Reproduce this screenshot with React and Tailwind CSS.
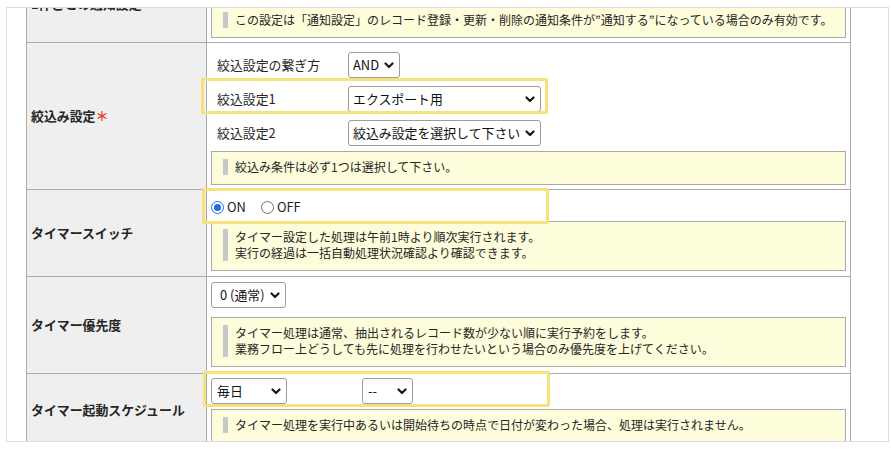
import React from "react";

const jp = "font-['Noto_Sans_CJK_JP','Noto_Sans',sans-serif]";

function Select({ value, className }) {
  return (
    <div className={`flex h-[26px] items-center rounded-[3px] border border-[#9c9c9c] bg-white pl-[4px] pr-[5px] text-[12.9px] text-[#111] ${className}`}>
      <span className="flex-1 overflow-hidden whitespace-nowrap leading-[20px]">{value}</span>
      <svg width="10" height="7" viewBox="0 0 10 7" className="ml-[3px] shrink-0">
        <path d="M1.5 1.5 L5 5 L8.5 1.5" fill="none" stroke="#1a1a1a" strokeWidth="2.2" strokeLinecap="round" strokeLinejoin="round" />
      </svg>
    </div>
  );
}

function Note({ lines, className = "" }) {
  return (
    <div className={`border border-[#aaa] bg-[#fdfcdb] pl-[11px] pt-[7px] pb-[9px] ${className}`}>
      <div className="border-l-[5px] border-[#c8c8c8] pl-[7px] text-[12px] leading-[16px] text-[#262626]">
        {lines.map((l, i) => (
          <div key={i} className="whitespace-nowrap">{l}</div>
        ))}
      </div>
    </div>
  );
}

function Row({ label, required, className, children }) {
  return (
    <div className={`flex border-b border-[#aaa] ${className}`}>
      <div className="flex w-[180px] shrink-0 items-center border-r border-[#aaa] bg-[#efefef] pl-[4px] text-[12.9px] font-bold leading-[16px] text-[#262626]">
        <span className="whitespace-nowrap">
          {label}
          {required && <span className="text-[#e0401c]">＊</span>}
        </span>
      </div>
      <div className="flex min-w-0 flex-1 flex-col px-[4px]">{children}</div>
    </div>
  );
}

function Radio({ checked, label }) {
  return (
    <div className="flex items-center">
      {checked ? (
        <span className="flex h-[13px] w-[13px] items-center justify-center rounded-full border-[1.5px] border-[#1f6fe5] bg-white">
          <span className="h-[7px] w-[7px] rounded-full bg-[#1f6fe5]" />
        </span>
      ) : (
        <span className="h-[13px] w-[13px] rounded-full border border-[#6f6f6f] bg-white" />
      )}
      <span className="ml-[3px] text-[12.9px] leading-[16px] text-[#222]">{label}</span>
    </div>
  );
}

function FormLine({ label, children }) {
  return (
    <div className="flex h-[34px] items-center pl-[6px]">
      <span className="w-[131px] shrink-0 text-[12.9px] leading-[16px] text-[#262626]">{label}</span>
      {children}
    </div>
  );
}

export default function App() {
  return (
    <div className={`relative h-[450px] w-[891px] overflow-hidden bg-white pl-[6px] pt-[7px] ${jp}`}>
      <div className="h-[435px] w-[883px] overflow-hidden border border-[#dcdcdc] bg-white">
        <div className="ml-[19px] mt-[-43px] w-[825px] border-x border-t border-[#aaa]">
          {/* 1件ごとの通知設定 */}
          <Row label="1件ごとの通知設定" className="h-[77px]">
            <div className="flex-1" />
            <Note
              className="mb-[4px]"
              lines={["この設定は「通知設定」のレコード登録・更新・削除の通知条件が”通知する”になっている場合のみ有効です。"]}
            />
          </Row>

          {/* 絞込み設定 */}
          <Row label="絞込み設定" required className="h-[147px]">
            <div className="pt-[5px]">
              <FormLine label="絞込設定の繋ぎ方">
                <Select value="AND" className="w-[52px]" />
              </FormLine>
              <FormLine label="絞込設定1">
                <Select value="エクスポート用" className="w-[193px]" />
              </FormLine>
              <FormLine label="絞込設定2">
                <Select value="絞込み設定を選択して下さい" className="w-[193px]" />
              </FormLine>
            </div>
            <Note className="mt-[1px]" lines={["絞込み条件は必ず1つは選択して下さい。"]} />
          </Row>

          {/* タイマースイッチ */}
          <Row label="タイマースイッチ" className="h-[87px]">
            <div className="flex h-[31px] items-center gap-[15px] pt-[3px]">
              <Radio checked label="ON" />
              <Radio label="OFF" />
            </div>
            <Note
              lines={[
                "タイマー設定した処理は午前1時より順次実行されます。",
                "実行の経過は一括自動処理状況確認より確認できます。",
              ]}
            />
          </Row>

          {/* タイマー優先度 */}
          <Row label="タイマー優先度" className="h-[97px]">
            <Select value="0 (通常)" className="mt-[5px] w-[75px] pl-[8px]" />
            <Note
              className="mt-[9px]"
              lines={[
                "タイマー処理は通常、抽出されるレコード数が少ない順に実行予約をします。",
                "業務フロー上どうしても先に処理を行わせたいという場合のみ優先度を上げてください。",
              ]}
            />
          </Row>

          {/* タイマー起動スケジュール */}
          <Row label="タイマー起動スケジュール" className="h-[72px]">
            <div className="mt-[4px] flex gap-[75px]">
              <Select value="毎日" className="w-[76px] pl-[5px]" />
              <Select value="--" className="w-[51px] pl-[5px]" />
            </div>
            <Note
              className="mt-[5px]"
              lines={["タイマー処理を実行中あるいは開始待ちの時点で日付が変わった場合、処理は実行されません。"]}
            />
          </Row>
        </div>
      </div>

      {/* annotation highlights */}
      <div className="pointer-events-none absolute left-[201px] top-[78px] h-[36px] w-[347px] rounded-[2px] border-[3px] border-[#f5e27c]" />
      <div className="pointer-events-none absolute left-[202px] top-[188px] h-[36px] w-[347px] rounded-[2px] border-[3px] border-[#f5e27c]" />
      <div className="pointer-events-none absolute left-[203px] top-[371px] h-[36px] w-[347px] rounded-[2px] border-[3px] border-[#f5e27c]" />
    </div>
  );
}
